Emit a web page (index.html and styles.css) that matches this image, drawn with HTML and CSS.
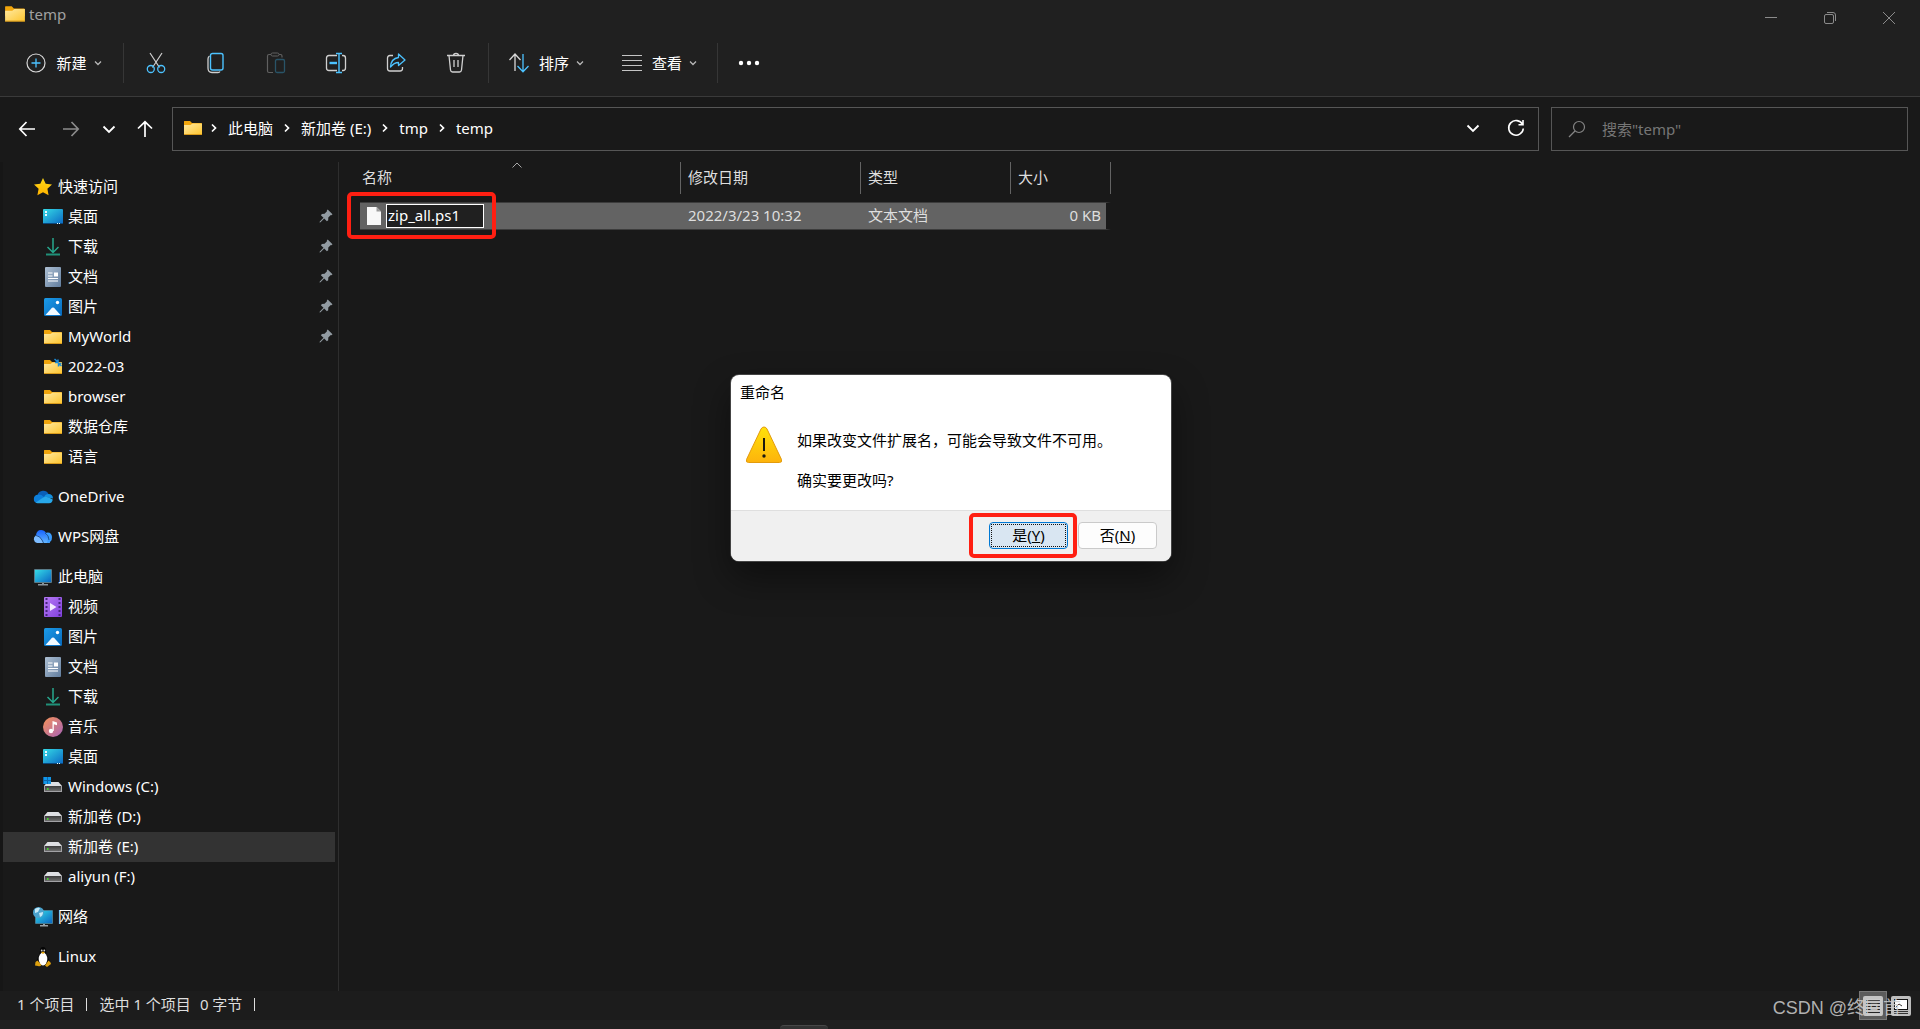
FILE: index.html
```html
<!DOCTYPE html>
<html lang="zh-CN">
<head>
<meta charset="utf-8">
<title>temp</title>
<link rel="stylesheet" href="styles.css">
</head>
<body>
<svg class="sprite" aria-hidden="true">
  <defs>
    <linearGradient id="g-folder" x1="0" y1="0" x2="1" y2="1"><stop offset="0" stop-color="#ffe9a2"/><stop offset="1" stop-color="#fdc52f"/></linearGradient>
    <linearGradient id="g-screen" x1="0" y1="0" x2="1" y2="1"><stop offset="0" stop-color="#35dbe6"/><stop offset="1" stop-color="#0b68c4"/></linearGradient>
    <linearGradient id="g-doc" x1="0" y1="0" x2="1" y2="1"><stop offset="0" stop-color="#aec0d3"/><stop offset="1" stop-color="#617d9e"/></linearGradient>
    <linearGradient id="g-pic" x1="0" y1="0" x2="1" y2="1"><stop offset="0" stop-color="#1c9be8"/><stop offset="1" stop-color="#0669bd"/></linearGradient>
    <linearGradient id="g-video" x1="0" y1="0" x2="1" y2="1"><stop offset="0" stop-color="#b77af5"/><stop offset="1" stop-color="#8040de"/></linearGradient>
    <linearGradient id="g-music" x1="0" y1="0" x2="1" y2="1"><stop offset="0" stop-color="#f79256"/><stop offset="1" stop-color="#a663b8"/></linearGradient>
    <linearGradient id="g-warn" x1="0" y1="0" x2="0" y2="1"><stop offset="0" stop-color="#ffe20a"/><stop offset="1" stop-color="#fdb30c"/></linearGradient>
    <linearGradient id="g-star" x1="0" y1="0" x2="0" y2="1"><stop offset="0" stop-color="#ffd817"/><stop offset="1" stop-color="#ffb300"/></linearGradient>
    <linearGradient id="g-drive" x1="0" y1="0" x2="0" y2="1"><stop offset="0" stop-color="#3b3b3b"/><stop offset="1" stop-color="#777"/></linearGradient>
    <linearGradient id="g-wps" x1="0" y1="0" x2="0" y2="1"><stop offset="0" stop-color="#1763ff"/><stop offset="1" stop-color="#62b5ff"/></linearGradient>
  </defs>
  <symbol id="folder" viewBox="0 0 20 20"><path d="M1 3.500Q1 3 1.500 3H7L9 5H18Q19 5 19 6V12H1Z" fill="#f2a60c"/><path d="M1 7H7.500L9.500 5.500H19V16.500H1Z" fill="url(#g-folder)"/><path d="M1 16.500H19" stroke="#d99b1b"/></symbol>
  <symbol id="folder-link" viewBox="0 0 20 20"><use href="#folder"/><path d="M11.500 2 15 5M15 2.500V5.500H12M18.500 9 16 7M15.500 9.500V6.500H18.500" fill="none" stroke="#1c8bd6" stroke-width="1.500"/></symbol>
  <symbol id="star" viewBox="0 0 20 20"><path d="M10 1 12.700 6.700 19 7.500 14.400 11.800 15.600 18.200 10 15.200 4.400 18.200 5.600 11.800 1 7.500 7.300 6.700Z" fill="url(#g-star)"/></symbol>
  <symbol id="desktop" viewBox="0 0 20 20"><rect y="2" width="20" height="15" rx="1" fill="url(#g-screen)"/><path d="M0 16H20V17H0Z" fill="#0a477c"/><path d="M2 4h2v2H2zM2 7h2v2H2zM14 16h1v1h-1zM16 16h1v1h-1z" fill="#e8fbff"/></symbol>
  <symbol id="download" viewBox="0 0 20 20"><path d="M10 1V15M4.500 10 10 15.500 15.500 10" fill="none" stroke="#27a78d" stroke-width="1.500"/><path d="M3 17.500H17" stroke="#209079" stroke-width="2"/></symbol>
  <symbol id="document" viewBox="0 0 20 20"><rect x="2" y="0" width="16" height="20" rx="1" fill="url(#g-doc)"/><path d="M5 6H9.500M5 9H9.500M5 11.500H15M5 14H15" stroke="#fff" stroke-width="1.200"/><path d="M11 5.500h4v4h-4z" fill="#fff"/></symbol>
  <symbol id="picture" viewBox="0 0 20 20"><rect x="1" y="1" width="18" height="18" rx="1.500" fill="url(#g-pic)"/><path d="M2.500 18 9 10.800Q10 10 11 10.800L17.500 18Z" fill="#f3faff"/><circle cx="14.500" cy="5.500" r="1.700" fill="#fff"/></symbol>
  <symbol id="pin" viewBox="0 0 14 14"><path d="M8.700.5 13.500 5.200 12.500 6.200 11.800 6 9.300 8.500 9.200 11.200 7.900 12.200 5.200 9.500 1.500 13.200.5 13.500.8 12.500 4.500 8.800 1.900 6.200 2.900 5 5.500 4.800 8 2.300 7.800 1.500Z" fill="#929ba2"/></symbol>
  <symbol id="onedrive" viewBox="0 0 20 20"><path d="M4.500 8A6 6 0 0 1 15.500 7L12 12Z" fill="#0a5fb8"/><path d="M4.200 16A4.200 4.200 0 0 1 4.700 7.700Q8 7.200 11 10L7 15.500Z" fill="#0d7fdb"/><path d="M11 10A5 5 0 0 1 15.500 7 4.600 4.600 0 0 1 20 11.500Z" fill="#1490df"/><path d="M2.500 15.700 10.500 10.300Q14 8.800 19.700 12.500 19.500 16 16 16.300H4.500Z" fill="#28a8ea"/></symbol>
  <symbol id="wps" viewBox="0 0 20 20"><path d="M3 8.500Q3.500 3 8 3 11.500 3 13 6L17 16H5.500L2 9Z" fill="url(#g-wps)"/><path d="M6.500 16H4A4 4 0 0 1 3 8.500Q6 8.500 8.500 12L10.500 16Z" fill="#7dbcff"/><path d="M12 6Q18.500 4 19 10 19 15.700 14 16 16 11 12 6Z" fill="#3b9dff"/><path d="M3 8.500Q7 9 9 13L10.500 16M12 6Q16 8 16 13" fill="none" stroke="#173d72" stroke-width=".8"/></symbol>
  <symbol id="computer" viewBox="0 0 20 20"><rect x="1" y="2" width="18" height="14" rx="1" fill="#587b89"/><path d="M2 3H18V15H2Z" fill="url(#g-screen)"/><path d="M9 16h2v1h4v1.500H5V17h4z" fill="#8a949b"/></symbol>
  <symbol id="video" viewBox="0 0 20 20"><rect x="1" width="18" height="20" rx="1" fill="url(#g-video)"/><path d="M3.500 1V20M16.500 1V20" stroke="#47257e" stroke-width="2" stroke-dasharray="2 2"/><path d="M7 6 13.500 10 7 14Z" fill="#f3eaff"/></symbol>
  <symbol id="music" viewBox="0 0 20 20"><circle cx="10" cy="10" r="10" fill="url(#g-music)"/><circle cx="8" cy="14" r="2.200" fill="#fff"/><path d="M9.500 14V4L14 5.500V8.300L10.800 7.200V14Z" fill="#fff"/></symbol>
  <symbol id="drive" viewBox="0 0 20 20"><path d="M4.500 5H15.500L19 9H1Z" fill="#dedfe3"/><rect x="1" y="9" width="18" height="6" rx="1" fill="url(#g-drive)"/><path d="M1 14.500H19M1.500 9V15M18.500 9V15" stroke="#a2a2a5"/><path d="M4 11h1.500v2H4z" fill="#45d32b"/></symbol>
  <symbol id="drive-win" viewBox="0 0 20 20"><use href="#drive"/><path d="M0 0h8v7H0z" fill="#0c66ad"/><path d="M1 0h3v3H1zM5 0h3v3H5zM1 4h3v3H1zM5 4h3v3H5z" fill="#1296e6"/></symbol>
  <symbol id="network" viewBox="0 0 20 20"><rect x="2" y="3" width="18" height="14" rx="1" fill="#427c95"/><path d="M3 4H19V16H3Z" fill="url(#g-screen)"/><path d="M10 17h2v1h3v1.500H7V18h3z" fill="#9aa1a6"/><circle cx="5.500" cy="5.500" r="5.500" fill="#4aa2cd"/><path d="M2 2Q5 0 7 1L5 5 2 6ZM6 6 10 5Q10 9 7 10Z" fill="#c5e9f7"/></symbol>
  <symbol id="linux" viewBox="0 0 20 20"><path d="M10 0Q13 0 13 4 13 7 15 10 17 14 16 17H4Q3 14 5 10 7 7 7 4 7 0 10 0Z" fill="#050505"/><ellipse cx="10" cy="12" rx="4.300" ry="6.500" fill="#fff"/><circle cx="8.700" cy="3.500" r=".9" fill="#ccc"/><circle cx="11.300" cy="3.500" r=".9" fill="#ccc"/><path d="M8 5.500 10 4.500 12 5.500 10 7Z" fill="#e9a80e"/><path d="M4.500 13.500 8.500 18Q7 20 5 19L2 18.500 2.500 15ZM15.500 13.500 17.500 15.500 18 17 14 20 12 18.500Z" fill="#dda00e"/></symbol>
  <symbol id="chevron" viewBox="0 0 8 8"><path d="M1 2.500 4 5.500 7 2.500" fill="none" stroke="currentColor" stroke-width="1.300"/></symbol>
  <symbol id="chevron-lg" viewBox="0 0 14 14"><path d="M1.500 4.500 7 10 12.500 4.500" fill="none" stroke="currentColor" stroke-width="1.800"/></symbol>
  <symbol id="crumb" viewBox="0 0 8 10"><path d="M2 1.500 5.500 5 2 8.500" fill="none" stroke="currentColor" stroke-width="1.700"/></symbol>
</svg>

<header class="chrome">
  <div class="titlebar">
    <svg class="icon-title"><use href="#folder"/></svg>
    <h1 class="title">temp</h1>
    <div class="window-buttons">
      <button class="window-button" aria-label="最小化"><svg width="12" height="12" viewBox="0 0 12 12"><path d="M0 5.500H12" stroke="#8b8b8b"/></svg></button>
      <button class="window-button" aria-label="还原"><svg width="12" height="12" viewBox="0 0 12 12" fill="none" stroke="#8b8b8b"><rect x=".5" y="2.500" width="9" height="9" rx="1.500"/><path d="M3 .5H9Q11.500.5 11.500 3V9"/></svg></button>
      <button class="window-button" aria-label="关闭"><svg width="12" height="12" viewBox="0 0 12 12"><path d="M0 0 12 12M12 0 0 12" stroke="#8b8b8b"/></svg></button>
    </div>
  </div>
  <div class="commands">
    <button class="command command-new"><svg width="20" height="20" viewBox="0 0 20 20" fill="none"><circle cx="10" cy="10" r="9" stroke="#d8d8d8" stroke-width="1.200"/><path d="M10 5.500V14.500M5.500 10H14.500" stroke="#4cc2ff" stroke-width="1.300"/></svg>新建<svg class="icon-chevron"><use href="#chevron"/></svg></button>
    <div class="icon-commands">
      <button class="icon-command" aria-label="剪切"><svg width="20" height="22" viewBox="0 0 20 22" fill="none"><path d="M4 1 13.500 15.500M16 1 6.500 15.500" stroke="#d0d0d0" stroke-width="1.200"/><circle cx="4.800" cy="17" r="3.500" stroke="#4cc2ff" stroke-width="1.300"/><circle cx="15.200" cy="17" r="3.500" stroke="#4cc2ff" stroke-width="1.300"/></svg></button>
      <button class="icon-command" aria-label="复制"><svg width="20" height="22" viewBox="0 0 20 22" fill="none"><path d="M3.500 4Q2 5 2 7V16Q2 20.500 6 20.500H12Q13.500 20.500 14 19.500" stroke="#d0d0d0" stroke-width="1.300"/><rect x="4.500" y="1.500" width="12.500" height="16.500" rx="2" stroke="#4cc2ff" stroke-width="1.400"/></svg></button>
      <button class="icon-command" aria-label="粘贴" disabled><svg width="20" height="22" viewBox="0 0 20 22" fill="none"><path d="M7 20.500H3Q1.500 20.500 1.500 19V4Q1.500 2.500 3 2.500H5M13 2.500H14.500Q16 2.500 16 4V5.500" stroke="#606060" stroke-width="1.200"/><rect x="5" y="1" width="8" height="3" rx="1.500" stroke="#606060"/><rect x="9.500" y="7.500" width="9" height="13" rx="1.500" stroke="#295468" stroke-width="1.300"/></svg></button>
      <button class="icon-command" aria-label="重命名"><svg width="22" height="22" viewBox="0 0 22 22" fill="none"><path d="M12 3.500H4Q1.500 3.500 1.500 6V16Q1.500 18.500 4 18.500H12M17 3.500H18Q20.500 3.500 20.500 6V16Q20.500 18.500 18 18.500H17" stroke="#d0d0d0" stroke-width="1.300"/><path d="M11 1.500H17M11 20.500H17M14 1.500V20.500" stroke="#4cc2ff" stroke-width="1.400"/><path d="M4.500 11H12" stroke="#4cc2ff" stroke-width="2.400"/></svg></button>
      <button class="icon-command" aria-label="共享"><svg width="20" height="22" viewBox="0 0 20 22" fill="none"><path d="M7 3.500H4Q1.500 3.500 1.500 6V16.500Q1.500 19 4 19H14Q16.500 19 16.500 16.500V15" stroke="#d0d0d0" stroke-width="1.300"/><path d="M12.500 2 19 8 12.500 13.500V10.500Q8 10.500 4.500 15 5 6.500 12.500 5.500Z" stroke="#4cc2ff" stroke-width="1.300" stroke-linejoin="round"/></svg></button>
      <button class="icon-command" aria-label="删除"><svg width="20" height="22" viewBox="0 0 20 22" fill="none" stroke="#d0d0d0" stroke-width="1.300"><path d="M1 3.500H19M7.500 3.500Q7.500 1.300 10 1.300 12.500 1.300 12.500 3.500M3 3.500 4.500 18Q4.800 20 6.500 20H13.500Q15.200 20 15.500 18L17 3.500M8 8V15M12 8V15"/></svg></button>
    </div>
    <div class="menu-commands">
      <button class="command"><svg width="20" height="20" viewBox="0 0 20 20" fill="none" stroke-width="1.300"><path d="M6 18V1M.5 7 6 1 11.500 7" stroke="#d8d8d8"/><path d="M14 1V18.500M8.500 13 14 18.700 19.500 13" stroke="#4cc2ff"/></svg>排序<svg class="icon-chevron"><use href="#chevron"/></svg></button>
      <button class="command"><svg width="20" height="20" viewBox="0 0 20 20"><path d="M0 2.500H20M0 7.500H20M0 12.500H20M0 17.500H20" stroke="#c4c4c4" stroke-width="1.200"/></svg>查看<svg class="icon-chevron"><use href="#chevron"/></svg></button>
    </div>
    <button class="icon-command" aria-label="更多"><svg width="22" height="6" viewBox="0 0 22 6" fill="#fff"><circle cx="3" cy="3" r="2.200"/><circle cx="11" cy="3" r="2.200"/><circle cx="19" cy="3" r="2.200"/></svg></button>
  </div>
</header>

<nav class="navbar" aria-label="导航">
  <div class="history">
    <button class="plain" aria-label="后退"><svg width="18" height="18" viewBox="0 0 18 18" fill="none" stroke="#fff" stroke-width="1.700"><path d="M17 9H2M8.500 2 1.800 9 8.500 16"/></svg></button>
    <button class="plain" aria-label="前进"><svg width="18" height="18" viewBox="0 0 18 18" fill="none" stroke="#8c8c8c" stroke-width="1.700"><path d="M1 9H16M9.500 2 16.200 9 9.500 16"/></svg></button>
    <button class="plain" aria-label="最近位置"><svg class="icon-chevron-lg"><use href="#chevron-lg"/></svg></button>
    <button class="plain" aria-label="向上"><svg width="18" height="18" viewBox="0 0 18 18" fill="none" stroke="#fff" stroke-width="1.700"><path d="M9 17V2M2 8.500 9 1.800 16 8.500"/></svg></button>
  </div>
  <div class="address">
    <svg class="icon"><use href="#folder"/></svg>
    <ol class="crumbs">
      <li><svg class="icon-crumb"><use href="#crumb"/></svg><a href="#pc">此电脑</a></li>
      <li><svg class="icon-crumb"><use href="#crumb"/></svg><a href="#e">新加卷 (E:)</a></li>
      <li><svg class="icon-crumb"><use href="#crumb"/></svg><a href="#tmp">tmp</a></li>
      <li><svg class="icon-crumb"><use href="#crumb"/></svg><a href="#temp">temp</a></li>
    </ol>
    <div class="address-tools">
      <button class="plain" aria-label="展开"><svg class="icon-chevron-lg"><use href="#chevron-lg"/></svg></button>
      <button class="plain" aria-label="刷新"><svg width="18" height="18" viewBox="0 0 18 18" fill="none" stroke="#fff" stroke-width="1.600"><path d="M15.500 5.500A7.300 7.300 0 1 0 16.300 9.500M16 1V5.700H11.500"/></svg></button>
    </div>
  </div>
  <label class="search">
    <svg width="18" height="18" viewBox="0 0 18 18" fill="none" stroke="#858585" stroke-width="1.200"><circle cx="11" cy="7" r="5.500"/><path d="M7 11 1 17"/></svg>
    <input class="search-input" type="text" aria-label="搜索" placeholder='搜索"temp"'>
  </label>
</nav>

<main class="main">
  <aside class="sidebar">
    <ul class="tree">
      <li><a class="node" href="#quick"><svg class="icon"><use href="#star"/></svg>快速访问</a>
        <ul class="branch">
          <li><a class="node" href="#desktop1"><svg class="icon"><use href="#desktop"/></svg>桌面<svg class="icon-pin"><use href="#pin"/></svg></a></li>
          <li><a class="node" href="#downloads1"><svg class="icon"><use href="#download"/></svg>下载<svg class="icon-pin"><use href="#pin"/></svg></a></li>
          <li><a class="node" href="#documents1"><svg class="icon"><use href="#document"/></svg>文档<svg class="icon-pin"><use href="#pin"/></svg></a></li>
          <li><a class="node" href="#pictures1"><svg class="icon"><use href="#picture"/></svg>图片<svg class="icon-pin"><use href="#pin"/></svg></a></li>
          <li><a class="node" href="#myworld"><svg class="icon"><use href="#folder"/></svg>MyWorld<svg class="icon-pin"><use href="#pin"/></svg></a></li>
          <li><a class="node" href="#2022"><svg class="icon"><use href="#folder-link"/></svg>2022-03</a></li>
          <li><a class="node" href="#browser"><svg class="icon"><use href="#folder"/></svg>browser</a></li>
          <li><a class="node" href="#warehouse"><svg class="icon"><use href="#folder"/></svg>数据仓库</a></li>
          <li><a class="node" href="#language"><svg class="icon"><use href="#folder"/></svg>语言</a></li>
        </ul>
      </li>
      <li><a class="node" href="#onedrive1"><svg class="icon"><use href="#onedrive"/></svg>OneDrive</a></li>
      <li><a class="node" href="#wps1"><svg class="icon"><use href="#wps"/></svg>WPS网盘</a></li>
      <li><a class="node" href="#pc"><svg class="icon"><use href="#computer"/></svg>此电脑</a>
        <ul class="branch">
          <li><a class="node" href="#videos"><svg class="icon"><use href="#video"/></svg>视频</a></li>
          <li><a class="node" href="#pictures2"><svg class="icon"><use href="#picture"/></svg>图片</a></li>
          <li><a class="node" href="#documents2"><svg class="icon"><use href="#document"/></svg>文档</a></li>
          <li><a class="node" href="#downloads2"><svg class="icon"><use href="#download"/></svg>下载</a></li>
          <li><a class="node" href="#music1"><svg class="icon"><use href="#music"/></svg>音乐</a></li>
          <li><a class="node" href="#desktop2"><svg class="icon"><use href="#desktop"/></svg>桌面</a></li>
          <li><a class="node" href="#c"><svg class="icon"><use href="#drive-win"/></svg>Windows (C:)</a></li>
          <li><a class="node" href="#d"><svg class="icon"><use href="#drive"/></svg>新加卷 (D:)</a></li>
          <li><a class="node node-current" href="#e"><svg class="icon"><use href="#drive"/></svg>新加卷 (E:)</a></li>
          <li><a class="node" href="#f"><svg class="icon"><use href="#drive"/></svg>aliyun (F:)</a></li>
        </ul>
      </li>
      <li><a class="node" href="#network1"><svg class="icon"><use href="#network"/></svg>网络</a></li>
      <li><a class="node" href="#linux1"><svg class="icon"><use href="#linux"/></svg>Linux</a></li>
    </ul>
  </aside>

  <section class="content">
    <svg class="sort-mark" viewBox="0 0 10 6"><path d="M.5 5.500 5 1 9.500 5.500" fill="none" stroke="#a8a8a8"/></svg>
    <table class="files">
      <colgroup><col class="col-name"><col class="col-date"><col class="col-type"><col class="col-size"></colgroup>
      <thead>
        <tr><th scope="col">名称</th><th scope="col">修改日期</th><th scope="col">类型</th><th scope="col">大小</th></tr>
      </thead>
      <tbody>
        <tr>
          <td><div class="file-name"><svg width="14" height="18" viewBox="0 0 14 18"><path d="M0 0H9.500L14 4.500V18H0Z" fill="#f8f8f8"/><path d="M9.500 0V4.500H14Z" fill="#9b9b9b"/></svg><input class="rename" type="text" aria-label="文件名" value="zip_all.ps1"></div></td>
          <td>2022/3/23 10:32</td>
          <td>文本文档</td>
          <td class="size">0 KB</td>
        </tr>
      </tbody>
    </table>
    <div class="marker marker-file"></div>
  </section>
</main>

<footer class="status">
  <span class="status-item">1 个项目</span>
  <span class="status-item"><span>选中 1 个项目</span><span>0 字节</span></span>
  <div class="views">
    <button class="view view-active" aria-label="详细信息"><svg width="20" height="20" viewBox="0 0 20 20"><rect width="20" height="20" rx="2" fill="#c4c4c4"/><path d="M3 4.500H17M3 7.500H17M3 10.500H17M3 13.500H17M3 16.500H17" stroke="#242424"/></svg></button>
    <button class="view" aria-label="大图标"><svg width="20" height="20" viewBox="0 0 20 20"><rect width="20" height="20" rx="2" fill="#bdbdbd"/><rect x="3.500" y="3.500" width="13" height="10" fill="#fff" stroke="#111"/><path d="M5 11 8 8 11 10M3 15.500H17M3 17.500H17" fill="none" stroke="#333"/></svg></button>
  </div>
  <span class="watermark">CSDN @终回首</span>
</footer>
<div class="edge"><span class="grip"></span></div>

<div class="dialog" role="dialog" aria-labelledby="dialog-title">
  <h2 class="dialog-title" id="dialog-title">重命名</h2>
  <div class="dialog-body">
    <svg class="warning" viewBox="0 0 38 38"><path d="M19 1Q21 1 22 3L36.500 33.500Q37.500 36.500 34.500 36.500H3.500Q.5 36.500 1.500 33.500L16 3Q17 1 19 1Z" fill="url(#g-warn)" stroke="#e39b0c"/><path d="M19 12V25" stroke="#1c1a10" stroke-width="2"/><circle cx="19" cy="30" r="1.700" fill="#1c1a10"/></svg>
    <div class="dialog-text"><p>如果改变文件扩展名，可能会导致文件不可用。</p><p>确实要更改吗?</p></div>
  </div>
  <div class="dialog-actions">
    <button class="dialog-button dialog-default"><span class="focus-ring">是(<u>Y</u>)</span></button>
    <button class="dialog-button">否(<u>N</u>)</button>
    <div class="marker marker-yes"></div>
  </div>
</div>
</body>
</html>
```
FILE: styles.css
```css
* { box-sizing: border-box; }

body {
  margin: 0;
  min-height: 100vh;
  display: flex;
  flex-direction: column;
  position: relative;
  background: #191919;
  color: #fff;
  font: 15px/20px "Noto Sans", "Noto Sans CJK SC", sans-serif;
}

button, input { font: inherit; color: inherit; }
button { border: 0; padding: 0; background: none; display: flex; align-items: center; justify-content: center; }
a { color: inherit; text-decoration: none; }
ul, ol { list-style: none; margin: 0; padding: 0; }
h1, h2, p { margin: 0; font-size: inherit; font-weight: normal; }
svg { display: block; flex: none; }

.sprite { position: absolute; width: 0; height: 0; }
.icon { width: 20px; height: 20px; }
.icon-title { width: 22px; height: 22px; }
.icon-chevron { width: 8px; height: 8px; color: #b8b8b8; margin-left: -3px; }
.icon-chevron-lg { width: 14px; height: 14px; }
.icon-crumb { width: 8px; height: 10px; }
.icon-pin { width: 14px; height: 14px; margin-left: auto; }

/* Title bar and commands */
.chrome { background: #202020; border-bottom: 1px solid #3a3a3a; }
.titlebar { display: flex; height: 30px; padding: 0 0 2px 4px; gap: 3px; align-items: center; }
.title { color: #a0a0a0; }
.window-buttons { display: flex; margin-left: auto; padding: 8px 2px 0 0; }
.window-button { width: 59px; height: 30px; }

.commands { display: flex; height: 66px; align-items: center; }
.command { height: 40px; gap: 10px; padding: 0 19px; }
.command-new { width: 123px; padding: 0 21px 0 26px; }
.icon-command { width: 60px; height: 40px; }
.icon-commands, .menu-commands { display: flex; border: solid #363636; border-width: 0 1px; }
.icon-commands { padding: 0 2px; }
.menu-commands { border-left: 0; padding: 0 1px; margin-right: 1px; }

/* Navigation row */
.navbar { display: flex; height: 65px; align-items: center; padding: 0 12px 1px 18px; }
.history { display: grid; grid-template-columns: 44px 40px 34px 36px; align-items: center; justify-items: start; }
.address { flex: 1; display: flex; align-items: center; height: 44px; border: 1px solid #565656; padding: 0 13px 2px 10px; gap: 7px; }
.crumbs { display: flex; gap: 10px; }
.crumbs li { display: flex; align-items: center; gap: 10px; }
.address-tools { display: flex; align-items: center; margin-left: auto; gap: 27px; }
.search { display: flex; align-items: center; width: 357px; height: 44px; border: 1px solid #565656; margin-left: 12px; padding-left: 16px; gap: 16px; }
.search-input { flex: 1; min-width: 0; border: 0; padding: 0; background: none; outline: 0; }
.search-input::placeholder { color: #767676; opacity: 1; }

/* Folder tree */
.main { flex: 1; display: flex; }
.sidebar { width: 339px; border-right: 1px solid #2e2e2e; border-left: 3px solid #161616; padding: 10px 3px 19px 0; }
.tree { display: flex; flex-direction: column; gap: 10px; }
.node { display: flex; align-items: center; height: 30px; gap: 5px; padding: 0 2px 2px 30px; }
.node .icon { margin-top: 1px; }
.branch .node { padding-left: 40px; }
.node-current { background: #333; }

/* File list */
.content { flex: 1; position: relative; padding-left: 21px; }
.files { width: 751px; table-layout: fixed; border-spacing: 0; }
.col-name { width: 321px; }
.col-date { width: 180px; }
.col-type { width: 150px; }
.col-size { width: 100px; }
.files th { height: 32px; padding: 0 7px 2px; border-right: 1px solid #636363; text-align: left; font-weight: normal; color: #dedede; }
.files th:first-child { padding-left: 2px; }
.files thead::after { content: ""; display: table-row; height: 8px; }
.files td { height: 28px; padding: 0 7px 2px; color: #dedede; background: #636363; border: solid #3c3c3c; border-width: 1px 0; }
.files td:first-child { padding: 0 7px; }
.files .size { text-align: right; border-right: 5px solid transparent; background-clip: padding-box; padding-right: 5px; }
.file-name { display: flex; align-items: center; gap: 5px; }
.rename { width: 98px; height: 24px; border: 1px solid #fff; padding: 0 1px 2px; background: #202020; color: #fff; outline: 0; }
.sort-mark { position: absolute; left: 173px; top: 0; width: 10px; height: 6px; }

.marker { position: absolute; border: 4px solid #ff1f12; border-radius: 5px; pointer-events: none; }
.marker-file { left: 8px; top: 30px; width: 149px; height: 47px; }
.marker-yes { right: 94px; top: 2px; width: 108px; height: 45px; }

/* Status bar */
.status { display: flex; align-items: center; height: 29px; padding-left: 17px; background: #1c1c1c; color: #dedede; position: relative; }
.status-item { display: flex; align-items: center; gap: 9px; padding-bottom: 3px; }
.status-item::after { content: ""; width: 1px; height: 13px; background: #dedede; margin: 0 12px 0 3px; }
.views { display: flex; margin-left: auto; padding-right: 5px; }
.view { width: 28px; height: 29px; }
.view-active { background: #5c5c5c; border: 1px solid #787878; }
.watermark { position: absolute; right: 19px; top: 6px; font: 18px/22px "Liberation Sans", "Noto Sans CJK SC", sans-serif; color: rgba(205, 205, 205, .85); }
.edge { display: flex; height: 9px; background: #202020; align-items: flex-end; padding-left: 780px; }
.grip { width: 48px; height: 4px; background: #333; border-top: 1px solid #484848; border-radius: 4px 4px 0 0; }

/* Rename confirmation */
.dialog { position: absolute; left: 731px; top: 375px; width: 440px; border-radius: 8px; background: #fff; color: #000; box-shadow: 0 0 0 1px #444, 0 16px 36px rgba(0, 0, 0, .45); }
.dialog-title { padding: 7px 9px 1px; }
.dialog-body { display: flex; gap: 14px; padding: 22px 14px 18px; height: 107px; }
.warning { width: 38px; height: 38px; margin-top: 1px; }
.dialog-text { display: flex; flex-direction: column; gap: 20px; padding-top: 5px; }
.dialog-actions { position: relative; display: flex; justify-content: flex-end; gap: 10px; height: 51px; padding: 11px 14px 0; background: #f0f0f0; border-top: 1px solid #dfdfdf; border-radius: 0 0 8px 8px; }
.dialog-button { width: 79px; height: 27px; padding-bottom: 2px; border: 1px solid #cacaca; border-radius: 4px; background: #fdfdfd; }
.dialog-default { padding: 0; border-color: #0078d4; background: #d9e6f2; }
.focus-ring { width: 75px; height: 23px; border: 1px dotted #111; }
```
